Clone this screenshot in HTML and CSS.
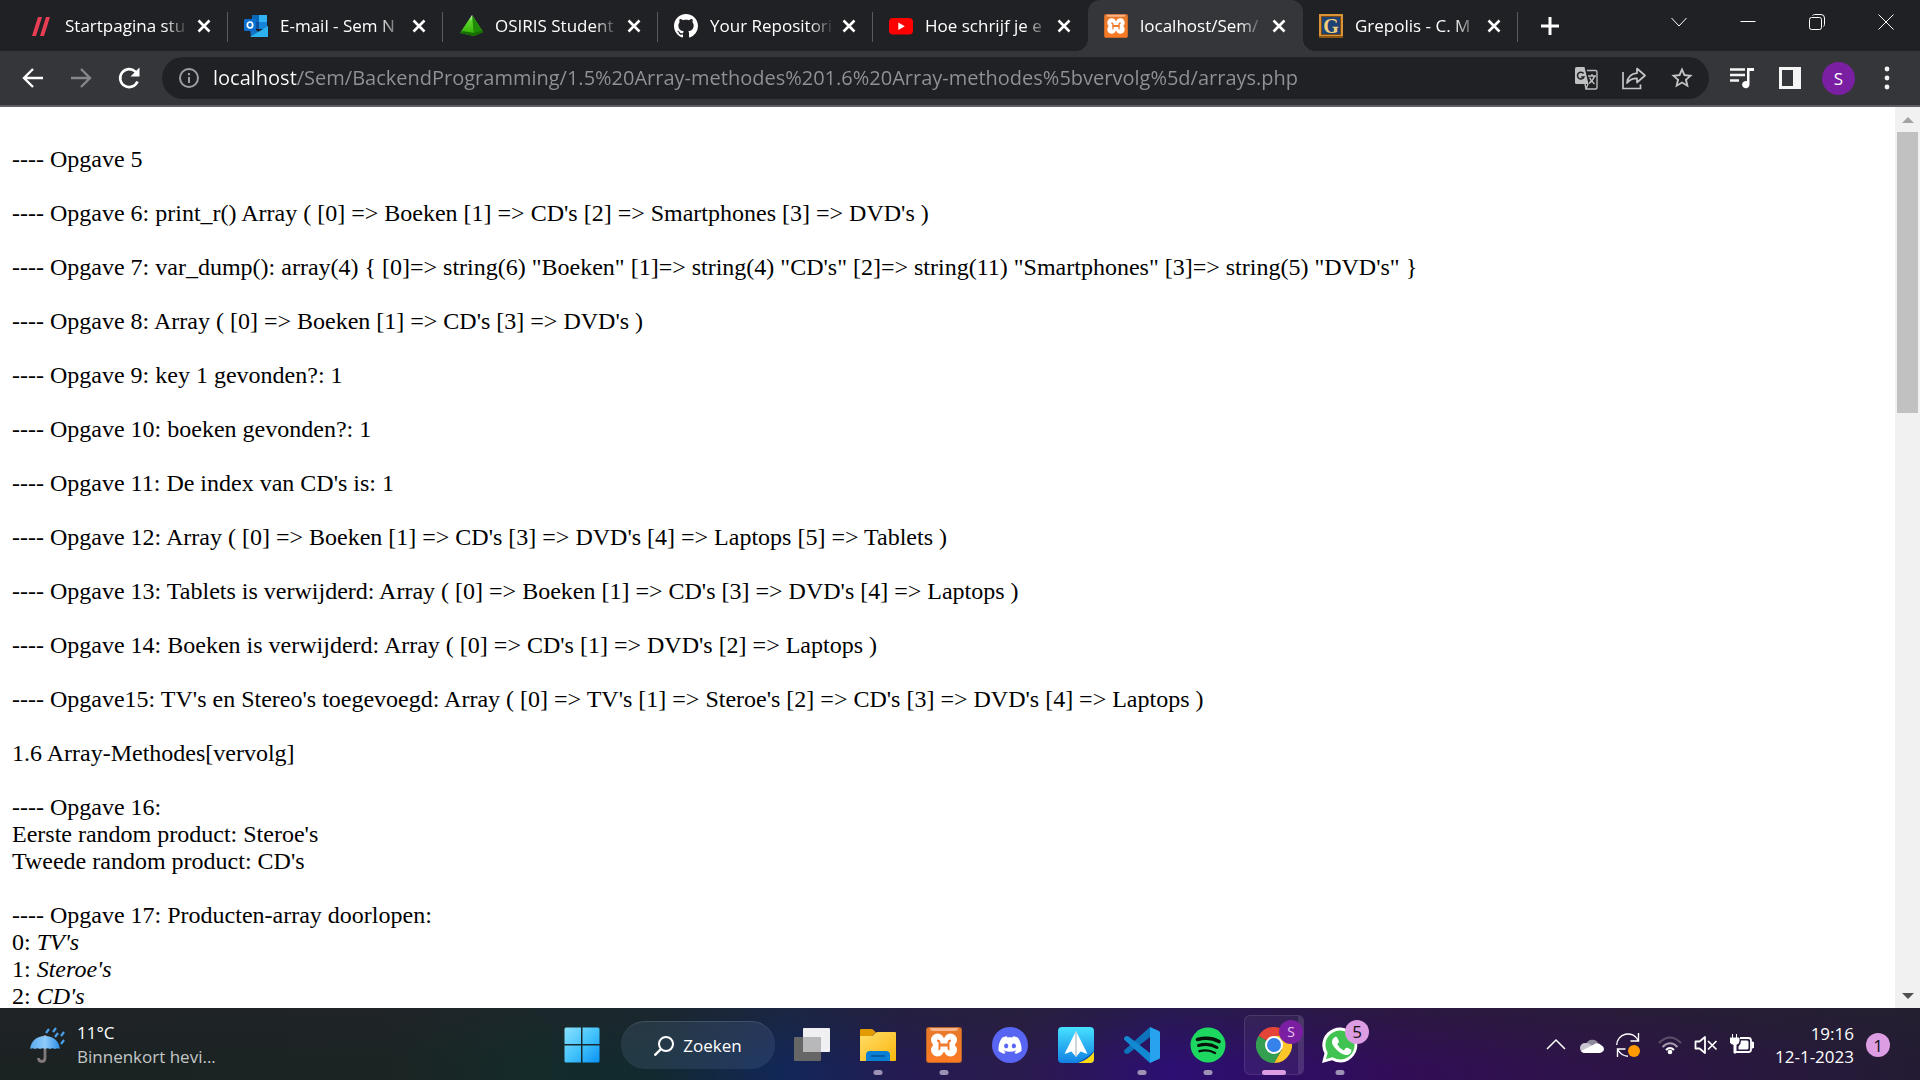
FILE: index.html
```html
<!DOCTYPE html>
<html lang="nl">
<head>
<meta charset="utf-8">
<title>localhost/Sem/BackendProgramming</title>
<link rel="stylesheet" href="styles.css">
</head>
<body>
<svg class="defs" aria-hidden="true">
  <defs>
    <linearGradient id="orange" x1="0" y1="0" x2="0" y2="1"><stop offset="0" stop-color="#e8792b"/><stop offset="1" stop-color="#fb7a24"/></linearGradient>
    <linearGradient id="win" x1="0" y1="0" x2="1" y2="1"><stop offset="0" stop-color="#8be0ff"/><stop offset=".5" stop-color="#45c4fb"/><stop offset="1" stop-color="#0a93f5"/></linearGradient>
    <linearGradient id="folder" x1="0" y1="0" x2="1" y2="1"><stop offset="0" stop-color="#ffdc6a"/><stop offset="1" stop-color="#fbb80c"/></linearGradient>
    <linearGradient id="sky" x1="0" y1="0" x2="0" y2="1"><stop offset="0" stop-color="#46e2ff"/><stop offset="1" stop-color="#1280e4"/></linearGradient>
    <linearGradient id="umbrella" x1="0" y1="0" x2="1" y2="0"><stop offset="0" stop-color="#58a9ec"/><stop offset=".5" stop-color="#8fcbfb"/><stop offset="1" stop-color="#2d8fe6"/></linearGradient>
    <linearGradient id="pyramid" x1="0" y1="0" x2="0" y2="1"><stop offset="0" stop-color="#d9f5d0"/><stop offset=".3" stop-color="#5bd628"/><stop offset="1" stop-color="#2fa800"/></linearGradient>
    <symbol id="xampp" viewBox="0 0 36 36">
      <rect width="36" height="36" rx="3" fill="#b5622b"/>
      <rect x="1" y="1" width="34" height="34" rx="2" fill="url(#orange)"/>
      <path d="M4 1h28q0 3-3 3H7q-3 0-3-3z" fill="#f8b58a"/>
      <g fill="#fff"><circle cx="11.500" cy="13" r="6.500"/><circle cx="24.500" cy="13" r="6.500"/><circle cx="11.500" cy="23" r="6.500"/><circle cx="24.500" cy="23" r="6.500"/><path d="M8 13h20v10H8zM12 11h12v14H12z"/></g>
      <path d="M11 13.500q2.500 0 2.500 2v5q0 2-1 2M25 13.500q-2.500 0-2.500 2v5q0 2 1 2" fill="none" stroke="#f07a2c" stroke-width="2"/>
      <path d="M13 18h10" stroke="#f07a2c" stroke-width="3"/>
    </symbol>
    <symbol id="cross" viewBox="0 0 24 24"><path d="M6.500 6.500l11 11m0-11l-11 11" stroke="#fff" stroke-width="2.600" fill="none"/></symbol>
    <symbol id="youtube" viewBox="0 0 24 24"><rect y="4" width="24" height="16.500" rx="4" fill="#f00"/><path d="M9.300 8.500l6.500 3.700-6.500 3.700z" fill="#fff"/></symbol>
  </defs>
</svg>

<header class="browser">
  <nav class="tabs" aria-label="Tabbladen">
    <div class="tab">
      <svg class="favicon" viewBox="0 0 24 24"><path d="M3 22L9 3h4L7 22zM11 22L17 3h4L15 22z" fill="#e83e54"/></svg>
      <span class="tab-title">Startpagina stu</span>
      <button class="tab-close" aria-label="Sluiten"><svg><use href="#cross"/></svg></button>
    </div>
    <div class="tab">
      <svg class="favicon" viewBox="0 0 24 24"><path d="M8 1h15v14H8z" fill="#1685d8"/><path d="M8 1h7v7H8z" fill="#0a67b8"/><path d="M15 1h8v7h-8z" fill="#33b4f2"/><path d="M8 8h7v7H8z" fill="#0d4f9c"/><path d="M6 13l9 5 9-6v11H7z" fill="#1573c6"/><path d="M6 23l18-11v11z" fill="#2bb2ef"/><rect y="5" width="12" height="12" rx="1" fill="#0a70cf"/><ellipse cx="6" cy="11" rx="2.700" ry="3" fill="none" stroke="#fff" stroke-width="1.700"/></svg>
      <span class="tab-title">E-mail - Sem N</span>
      <button class="tab-close" aria-label="Sluiten"><svg><use href="#cross"/></svg></button>
    </div>
    <div class="tab">
      <svg class="favicon" viewBox="0 0 24 24"><path d="M13 1L1 19l14 3 9-4z" fill="url(#pyramid)"/><path d="M13 1l11 17-9 4z" fill="#1f8a05"/><path d="M1 19l2-2 12 2 9-3v2l-9 4z" fill="#176b00"/></svg>
      <span class="tab-title">OSIRIS Student</span>
      <button class="tab-close" aria-label="Sluiten"><svg><use href="#cross"/></svg></button>
    </div>
    <div class="tab">
      <svg class="favicon" viewBox="0 0 16 16"><path fill="#fff" d="M8 0C3.580 0 0 3.580 0 8c0 3.540 2.290 6.530 5.470 7.590.4.070.55-.17.55-.38 0-.19-.01-.82-.01-1.490-2.010.370-2.530-.490-2.690-.940-.090-.230-.480-.940-.820-1.130-.280-.150-.680-.520-.010-.530.630-.010 1.080.580 1.230.820.720 1.210 1.870.870 2.330.660.070-.520.280-.870.510-1.070-1.780-.200-3.640-.890-3.640-3.950 0-.870.310-1.590.820-2.150-.080-.200-.360-1.020.080-2.120 0 0 .670-.210 2.200.820.640-.180 1.320-.270 2-.270.680 0 1.360.090 2 .270 1.530-1.040 2.200-.820 2.200-.820.440 1.100.160 1.920.080 2.120.510.560.820 1.270.820 2.150 0 3.070-1.870 3.750-3.650 3.950.290.250.540.730.540 1.480 0 1.070-.010 1.930-.010 2.200 0 .210.150.460.550.380A8.013 8.013 0 0016 8c0-4.420-3.580-8-8-8z"/></svg>
      <span class="tab-title">Your Repositori</span>
      <button class="tab-close" aria-label="Sluiten"><svg><use href="#cross"/></svg></button>
    </div>
    <div class="tab before-active">
      <svg class="favicon"><use href="#youtube"/></svg>
      <span class="tab-title">Hoe schrijf je e</span>
      <button class="tab-close" aria-label="Sluiten"><svg><use href="#cross"/></svg></button>
    </div>
    <div class="tab active">
      <svg class="favicon"><use href="#xampp"/></svg>
      <span class="tab-title">localhost/Sem/</span>
      <button class="tab-close" aria-label="Sluiten"><svg><use href="#cross"/></svg></button>
    </div>
    <div class="tab">
      <svg class="favicon" viewBox="0 0 24 24"><rect width="24" height="24" fill="#d9943a"/><rect y="22" width="24" height="2" fill="#8a5413"/><rect x="2" y="2" width="20" height="19" fill="#7d4a12"/><rect x="3" y="3" width="18" height="17" fill="#1d4275"/><text x="12" y="19" class="grepolis-letter">G</text></svg>
      <span class="tab-title">Grepolis - C. M</span>
      <button class="tab-close" aria-label="Sluiten"><svg><use href="#cross"/></svg></button>
    </div>
    <button class="new-tab" aria-label="Nieuw tabblad"><svg viewBox="0 0 18 18"><path d="M9 0v18M0 9h18" stroke="#fff" stroke-width="3"/></svg></button>
    <div class="window-controls">
      <button aria-label="Tabbladen zoeken"><svg viewBox="0 0 16 16"><path d="M.5 4l7.500 8 7.500-8"/></svg></button>
      <button aria-label="Minimaliseren"><svg viewBox="0 0 16 16"><path d="M.5 7.500h15"/></svg></button>
      <button aria-label="Herstellen"><svg viewBox="0 0 16 16"><rect x=".5" y="3.500" width="12" height="12" rx="2"/><path d="M3.500 1.500q1-1 2-1H12q3.500 0 3.500 3.500v6.500q0 1-1 2"/></svg></button>
      <button aria-label="Venster sluiten"><svg viewBox="0 0 16 16"><path d="M.5.5l15 15m0-15l-15 15"/></svg></button>
    </div>
  </nav>
  <div class="toolbar">
    <div class="navigation">
      <button aria-label="Terug"><svg viewBox="0 0 24 24"><path d="M22 12H3.500M12 3l-9 9 9 9" fill="none" stroke="#fff" stroke-width="2.400"/></svg></button>
      <button aria-label="Vooruit"><svg viewBox="0 0 24 24"><path d="M2 12h18.500M12 3l9 9-9 9" fill="none" stroke="#85878a" stroke-width="2.400"/></svg></button>
      <button aria-label="Vernieuwen"><svg viewBox="0 0 24 24"><path d="M20.500 15.500A9 9 0 1118.400 5.600L21 8.500" fill="none" stroke="#fff" stroke-width="2.600"/><path d="M22.500 1.500v9h-9z" fill="#fff"/></svg></button>
    </div>
    <div class="omnibox">
      <svg class="info" viewBox="0 0 20 20"><circle cx="10" cy="10" r="9" fill="none" stroke="#9aa0a6" stroke-width="2"/><path d="M10 9v6M10 5v2.200" stroke="#9aa0a6" stroke-width="2"/></svg>
      <input class="url" type="text" aria-label="Adres" value="localhost/Sem/BackendProgramming/1.5%20Array-methodes%201.6%20Array-methodes%5bvervolg%5d/arrays.php">
      <div class="omnibox-actions">
        <button aria-label="Vertalen"><svg viewBox="0 0 24 24"><path d="M13 4.500h8.500q1.500 0 1.500 1.500v15.500q0 1.500-1.500 1.500H12l-1-5" fill="none" stroke="#b9babc" stroke-width="1.400"/><path d="M2.500 1h8l4 17H2.500Q1 18 1 16.500v-14Q1 1 2.500 1z" fill="#c0c1c3"/><path d="M9.600 7.500A3.400 3.400 0 1010 11H7.200" fill="none" stroke="#202124" stroke-width="1.500"/><path d="M14 10h8M18 8v2m2.500 0q-1 4-5.500 7.500M15.500 11.500q1.500 3.500 5 6.500M14 18l-2 5" fill="none" stroke="#c0c1c3" stroke-width="1.400"/></svg></button>
        <button aria-label="Delen"><svg viewBox="0 0 24 24"><path d="M1 6v16.500h17.500v-4" fill="none" stroke="#c4c5c7" stroke-width="1.700"/><path d="M5 17q1-9 10-9.800V2.500L23 9.500l-8 7v-4.200Q9 12 5 17z" fill="none" stroke="#c4c5c7" stroke-width="1.700" stroke-linejoin="round"/></svg></button>
        <button aria-label="Bladwijzer"><svg viewBox="0 0 24 24"><path fill="#c4c5c7" d="M22.700 9l-7.600-.7L12 1.300 8.900 8.300 1.300 9l5.700 5-1.700 7.500 6.700-4 6.700 4L17 14zM12 15.600l-4 2.400 1.100-4.500-3.500-3 4.600-.4L12 5.800l1.800 4.300 4.600.4-3.500 3L16 18z"/></svg></button>
      </div>
    </div>
    <div class="extras">
      <button aria-label="Media"><svg viewBox="0 0 24 24"><path d="M0 3.500h15M0 9h15M0 14.500h9" stroke="#f5f5f5" stroke-width="2.600"/><path d="M17 2h7v3h-4.500v13.500a3.700 3.700 0 11-2.500-3.400z" fill="#fff"/></svg></button>
      <button aria-label="Zijvenster"><svg viewBox="0 0 24 24"><path fill="#f5f5f5" fill-rule="evenodd" d="M1 1h22v22H1zM4 4v16h11V4z"/></svg></button>
      <button class="avatar" aria-label="Profiel">S</button>
      <button aria-label="Menu"><svg viewBox="0 0 24 24"><g fill="#f5f5f5"><circle cx="12" cy="3" r="2.400"/><circle cx="12" cy="12" r="2.400"/><circle cx="12" cy="21" r="2.400"/></g></svg></button>
    </div>
  </div>
</header>

<div class="viewport">
  <main class="page"><br>
---- Opgave 5<br><br>
---- Opgave 6: print_r() Array ( [0] =&gt; Boeken [1] =&gt; CD's [2] =&gt; Smartphones [3] =&gt; DVD's )<br><br>
---- Opgave 7: var_dump(): array(4) { [0]=&gt; string(6) "Boeken" [1]=&gt; string(4) "CD's" [2]=&gt; string(11) "Smartphones" [3]=&gt; string(5) "DVD's" }<br><br>
---- Opgave 8: Array ( [0] =&gt; Boeken [1] =&gt; CD's [3] =&gt; DVD's )<br><br>
---- Opgave 9: key 1 gevonden?: 1<br><br>
---- Opgave 10: boeken gevonden?: 1<br><br>
---- Opgave 11: De index van CD's is: 1<br><br>
---- Opgave 12: Array ( [0] =&gt; Boeken [1] =&gt; CD's [3] =&gt; DVD's [4] =&gt; Laptops [5] =&gt; Tablets )<br><br>
---- Opgave 13: Tablets is verwijderd: Array ( [0] =&gt; Boeken [1] =&gt; CD's [3] =&gt; DVD's [4] =&gt; Laptops )<br><br>
---- Opgave 14: Boeken is verwijderd: Array ( [0] =&gt; CD's [1] =&gt; DVD's [2] =&gt; Laptops )<br><br>
---- Opgave15: TV's en Stereo's toegevoegd: Array ( [0] =&gt; TV's [1] =&gt; Steroe's [2] =&gt; CD's [3] =&gt; DVD's [4] =&gt; Laptops )<br><br>
1.6 Array-Methodes[vervolg]<br><br>
---- Opgave 16:<br>
Eerste random product: Steroe's<br>
Tweede random product: CD's<br><br>
---- Opgave 17: Producten-array doorlopen:<br>
0: <i>TV's</i><br>
1: <i>Steroe's</i><br>
2: <i>CD's</i>
  </main>
  <div class="scrollbar" aria-hidden="true">
    <svg viewBox="0 0 12 6"><path d="M0 6l6-6 6 6z" fill="#a3a3a3"/></svg>
    <div class="track"><div class="thumb"></div></div>
    <svg viewBox="0 0 12 6"><path d="M0 0l6 6 6-6z" fill="#505050"/></svg>
  </div>
</div>

<footer class="taskbar">
  <button class="weather">
    <svg viewBox="0 0 36 36"><path d="M15 8v23q0 3.500-3.200 3.500T8.500 31" fill="none" stroke="#82797b" stroke-width="2.800"/><path d="M0 22Q2 9.500 15 9q13 .5 15 13-2-1.500-5 0-2.500-1.500-5 0-2.500-1.500-5 0-2.500-1.500-5 0-2.500-1.500-5 0-3-1.500-5 0z" fill="url(#umbrella)"/><path d="M16 6l3-4M23 5l3-4M25 10l3-4M31 9l3-4M31 17l3-4" stroke="#4b9fe8" stroke-width="2.200"/></svg>
    <span class="weather-text"><span>11°C</span><span class="forecast">Binnenkort hevi...</span></span>
  </button>
  <div class="apps">
    <button class="app" aria-label="Start"><svg viewBox="0 0 36 36"><path fill="url(#win)" d="M2 .500h15v16.500H.500V2Q.500.500 2 .500zM18.500.500H34q1.500 0 1.500 1.500v15h-17zM.500 18.500H17v17H2q-1.500 0-1.500-1.500zM18.500 18.500h17V34q0 1.500-1.500 1.500H18.500z"/></svg></button>
    <button class="search"><svg viewBox="0 0 20 20"><circle cx="12" cy="8" r="7" fill="none" stroke="#fff" stroke-width="2"/><path d="M7 13l-6.500 6.500" stroke="#fff" stroke-width="2.400"/></svg>Zoeken</button>
    <button class="app" aria-label="Taakweergave"><svg viewBox="0 0 36 36"><rect y="10" width="27" height="24" rx="1" fill="#666"/><rect x="9" y="1" width="27" height="24" rx="1" fill="#f0f0f2"/><path d="M9 10h18v15H9z" fill="#b8b8ba"/></svg></button>
    <button class="app running" aria-label="Verkenner"><svg viewBox="0 0 36 36"><path d="M0 3q0-1 1-1h10q1.500 0 2.500 1l2.500 2.500L12 9H0z" fill="#e29b05"/><path d="M0 9h11q1.500 0 2.500-1l2-2q1-1 2.500-1h17q1 0 1 1v27q0 1-1 1H0z" fill="url(#folder)"/><path d="M6 34v-6q0-4 4-4h16q4 0 4 4v6z" fill="#0a7fd6"/><path d="M11 29h14" stroke="#075292" stroke-width="1.500"/></svg></button>
    <button class="app running" aria-label="XAMPP"><svg><use href="#xampp"/></svg></button>
    <button class="app" aria-label="Discord"><svg viewBox="0 0 36 36"><circle cx="18" cy="18" r="18" fill="#5865f2"/><g transform="translate(6.500 6.500) scale(.96)"><path fill="#fff" d="M20.317 4.370a19.791 19.791 0 00-4.885-1.515.074.074 0 00-.079.037c-.211.375-.445.865-.608 1.250-1.845-.276-3.680-.276-5.487 0-.164-.393-.406-.874-.618-1.250a.077.077 0 00-.079-.037 19.736 19.736 0 00-4.885 1.515.070.070 0 00-.032.028C.533 9.046-.319 13.580.099 18.058a.082.082 0 00.031.056c2.053 1.508 4.041 2.423 5.993 3.029a.078.078 0 00.084-.028c.462-.630.873-1.295 1.226-1.994a.076.076 0 00-.042-.106c-.653-.248-1.274-.550-1.872-.892a.077.077 0 01-.008-.128c.126-.094.252-.192.372-.291a.074.074 0 01.078-.011c3.928 1.793 8.180 1.793 12.061 0a.074.074 0 01.079.010c.120.099.246.198.373.292a.077.077 0 01-.007.128 12.299 12.299 0 01-1.873.891.077.077 0 00-.041.107c.360.698.772 1.363 1.225 1.993a.076.076 0 00.084.029c1.961-.607 3.950-1.522 6.002-3.029a.077.077 0 00.031-.055c.500-5.177-.838-9.674-3.549-13.660a.061.061 0 00-.031-.029zM8.020 15.331c-1.183 0-2.157-1.086-2.157-2.419s.956-2.419 2.157-2.419c1.211 0 2.176 1.095 2.157 2.419 0 1.333-.956 2.419-2.157 2.419zm7.975 0c-1.183 0-2.157-1.086-2.157-2.419s.955-2.419 2.157-2.419c1.211 0 2.176 1.095 2.157 2.419 0 1.333-.946 2.419-2.157 2.419z"/></g></svg></button>
    <button class="app" aria-label="Spark"><svg viewBox="0 0 36 36"><rect width="36" height="36" rx="4" fill="url(#sky)"/><path d="M19 36q10-5 17-12v8q0 4-4 4z" fill="#0752b8"/><path d="M20 36q10-3 16-11v7q0 4-4 4z" fill="#ffda12"/><path d="M18 4L6.500 27l7-2.500L18 30l4.500-5.500 7 2.500z" fill="#fff"/><path d="M18 5v24" stroke="#bfc7d0" stroke-width="1.500"/></svg></button>
    <button class="app running" aria-label="Visual Studio Code"><svg viewBox="0 0 36 36"><path d="M26 0L35 4q1 .5 1 1.500v25q0 1-1 1.500l-9 4z" fill="#27a3ee"/><path d="M26 0v10L4.500 26.500 2 27l-2-2q-.5-1 .5-2z" fill="#0d74bb"/><path d="M26 36V26L4.500 9.500 2 9l-2 2q-.5 1 .5 2z" fill="#1389d2"/></svg></button>
    <button class="app running" aria-label="Spotify"><svg viewBox="0 0 36 36"><circle cx="18" cy="18" r="17.500" fill="#1ed760"/><g fill="none" stroke="#08120b" stroke-linecap="round"><path d="M7.500 12.500q12-3.300 21.500 2" stroke-width="3.600"/><path d="M8.500 18.500q10-3 18.500 2" stroke-width="3"/><path d="M9.500 24.200q8.500-2.300 15.500 1.800" stroke-width="2.400"/></g></svg></button>
    <button class="app running current" aria-label="Chrome"><svg viewBox="0 0 36 36"><path d="M18 18L2.400 9A18 18 0 0133.600 9z" fill="#e33b2e"/><path d="M18 9h15.600A18 18 0 0118 36l7.800-13.500z" fill="#fcc31e"/><path d="M2.400 9A18 18 0 0018 36l7.800-13.500L18 18z" fill="#2a9a48"/><circle cx="18" cy="18" r="9" fill="#fff"/><circle cx="18" cy="18" r="7" fill="#2b7de9"/></svg><span class="badge profile">S</span></button>
    <button class="app running" aria-label="WhatsApp"><svg viewBox="0 0 36 36"><path d="M0 36l2.500-9.500A17.500 17.500 0 1119 35.500q-5 0-9-2.300z" fill="#fff"/><path d="M4 32l1.700-6.300A14.500 14.500 0 1119 32.500q-4.500 0-8.500-2.300z" fill="#40c351"/><path d="M13 10q1-.5 2 .2l2 4.300q0 1-1.700 2.700 2 4.300 6.500 6.300l2-2.500q.8-.6 1.600-.2l4 2q.5 4-4 5.200-4 .8-9.500-4-6-5.500-6-9.500.2-3 3.100-4.500z" fill="#fff"/></svg><span class="badge">5</span></button>
  </div>
  <div class="tray">
    <svg viewBox="0 0 24 24"><path d="M3 16l9-9 9 9" fill="none" stroke="#fff" stroke-width="1.500"/></svg>
    <svg viewBox="0 0 24 24"><path d="M6 12a6.500 6.500 0 0112-2l-6 8z" fill="#8f899b"/><path d="M5 20a5 5 0 010-10q5-.5 8 4z" fill="#c9c5d1"/><path d="M5 20q-3 0-4-2l13-6.500q4-2.500 7 .500 3 1.500 3 4t-4 4z" fill="#fff"/></svg>
    <svg viewBox="0 0 24 24"><path d="M.7 12A11.300 11.300 0 0122 7M22.500 0v8h-8M1.500 24v-8h8M2 17q3.500 6 10 6.300" fill="none" stroke="#fff" stroke-width="1.400"/><circle cx="18" cy="18" r="6" fill="#ff9b00"/></svg>
    <svg class="wifi" viewBox="0 0 24 24"><path d="M1 10q11-11 22 0" fill="none" stroke="#5c506a" stroke-width="2"/><g fill="none" stroke="#fff" stroke-width="2"><path d="M4.500 14q7.500-7.500 15 0" stroke="#a39bad"/><path d="M8 17q4-4 8 0"/></g><circle cx="12" cy="19" r="2.300" fill="#fff"/></svg>
    <svg viewBox="0 0 24 24"><path d="M1.500 8.500h4L11 4v16l-5.500-4.500h-4z" fill="none" stroke="#fff" stroke-width="1.800" stroke-linejoin="round"/><path d="M14 8l8.500 8.500m0-8.500L14 16.500" stroke="#fff" stroke-width="1.700"/></svg>
    <svg viewBox="0 0 24 24"><path d="M2.500 1v5M6.500 1v5M0 5h9v3q0 3-3 3.500V20H4v-8.500Q0 11 0 8zM22 9h1l1 1v4l-1 1h-1z" fill="#fff" stroke="#fff"/><path d="M10 5h8.500Q21 5 21 7.500v9q0 2.500-2.500 2.500H6" fill="none" stroke="#fff" stroke-width="1.800"/><path d="M11 7.500h6q1.500 0 1.500 1.500v6q0 1.500-1.500 1.500H8.500v-3Q11 11 11 7.500z" fill="#fff"/></svg>
    <div class="clock"><time>19:16</time><time>12-1-2023</time></div>
    <button class="notifications" aria-label="Meldingen">1</button>
  </div>
</footer>
</body>
</html>
```
FILE: styles.css
```css
* { box-sizing: border-box; }

body {
  margin: 0;
  height: 100vh;
  display: flex;
  flex-direction: column;
  overflow: hidden;
  background: #fff;
  font-family: "Open Sans", "Noto Sans", sans-serif;
  font-size: 17px;
  color: #fff;
}

button {
  margin: 0;
  padding: 0;
  border: 0;
  background: none;
  color: inherit;
  font: inherit;
  display: flex;
  align-items: center;
  justify-content: center;
}

svg { display: block; flex: none; }

.defs { position: absolute; width: 0; height: 0; }

/* Tab strip */
.tabs {
  display: flex;
  height: 51px;
  padding-left: 13px;
  background: #202124;
}

.tab {
  display: flex;
  align-items: center;
  width: 215px;
  padding: 0 12px 0 16px;
  position: relative;
}

.tab::after {
  content: "";
  position: absolute;
  right: 0;
  top: 12px;
  width: 1px;
  height: 30px;
  background: #5a5b5f;
}

.tab.active::after,
.tab.before-active::after { display: none; }

.tab.active {
  background: #35363a;
  border-radius: 12px 12px 0 0;
}

/* Outward curve on both feet of the active tab */
.tab.active::before {
  content: "";
  position: absolute;
  left: -12px;
  right: -12px;
  bottom: 0;
  height: 12px;
  background:
    radial-gradient(circle at 0 0, transparent 12px, #35363a 12px) left / 12px 12px no-repeat,
    radial-gradient(circle at 100% 0, transparent 12px, #35363a 12px) right / 12px 12px no-repeat;
}

.favicon { width: 24px; height: 24px; }

.tab-title {
  flex: 1;
  margin: 0 3px 0 12px;
  white-space: nowrap;
  mask-image: linear-gradient(to right, #000 80%, transparent);
}

.tab-close,
.tab-close svg { width: 24px; height: 24px; }

.grepolis-letter {
  font: bold 20px "Liberation Serif", serif;
  fill: #f2cf7a;
  text-anchor: middle;
}

.new-tab { width: 64px; }
.new-tab svg { width: 18px; height: 18px; }

.window-controls {
  display: flex;
  margin-left: auto;
  height: 44px;
}

.window-controls button { width: 69px; }

.window-controls svg {
  width: 16px;
  height: 16px;
  fill: none;
  stroke: #fff;
}

/* Toolbar */
.toolbar {
  display: flex;
  align-items: center;
  height: 56px;
  padding: 0 9px;
  background: #35363a;
  border-bottom: 2px solid #5f6064;
}

.navigation { display: flex; margin-right: 9px; }
.navigation button { width: 48px; height: 42px; }
.navigation svg { width: 24px; height: 24px; }

.omnibox {
  flex: 1;
  display: flex;
  align-items: center;
  height: 42px;
  padding: 0 3px 0 17px;
  border-radius: 21px;
  background: #202124;
}

.info { width: 20px; height: 20px; }

/* The host is drawn bright, the rest of the address dimmed */
.url {
  flex: 1;
  min-width: 0;
  margin-left: 14px;
  padding: 0;
  border: 0;
  outline: 0;
  font: inherit;
  font-size: 20px;
  line-height: 30px;
  color: transparent;
  background: linear-gradient(to right, #fff 84px, #909396 84px);
  background-clip: text;
  -webkit-background-clip: text;
}

.omnibox-actions { display: flex; }
.omnibox-actions button { width: 48px; height: 42px; }
.omnibox-actions svg { width: 24px; height: 24px; }

.extras { display: flex; align-items: center; margin-left: 9px; }
.extras button { width: 48px; height: 33px; }
.extras svg { width: 24px; height: 24px; }

.extras .avatar {
  width: 33px;
  margin: 0 8px;
  border-radius: 50%;
  background: #7b1fa2;
}

/* Document */
.viewport {
  flex: 1;
  min-height: 0;
  display: flex;
}

.page {
  flex: 1;
  overflow: hidden;
  padding: 12px;
  color: #000;
  font: 24px/27px "Liberation Serif", serif;
}

.scrollbar {
  width: 25px;
  display: flex;
  flex-direction: column;
  align-items: center;
  padding: 10px 2px 9px;
  background: #f1f1f1;
}

.scrollbar svg { width: 12px; height: 6px; }

.track { flex: 1; width: 100%; padding: 9px 0; }
.thumb { height: 33%; background: #c1c1c1; }

/* Taskbar */
.taskbar {
  display: grid;
  grid-template-columns: 1fr auto 1fr;
  height: 72px;
  padding-top: 2px;
  background:
    linear-gradient(to bottom, rgba(36, 36, 44, 0.5), transparent 80%),
    linear-gradient(to right, #1b2222 0%, #1b2423 20%, #142b2a 28%, #12292f 34%, #122758 41%, #241b52 47%, #2a1b4c 53%, #2c0f72 61%, #320d56 73%, #2e1349 82%, #251a38 96%, #231b33 100%);
}

.weather { justify-self: start; padding-left: 30px; }
.weather svg { width: 36px; height: 36px; }

.weather-text {
  display: flex;
  flex-direction: column;
  margin-left: 11px;
  line-height: 24px;
  text-align: left;
}

.forecast { color: #c3c7c7; }

.apps { display: flex; align-items: center; padding-left: 2px; }

.app {
  position: relative;
  width: 66px;
  height: 60px;
}

.app svg { width: 36px; height: 36px; }

.search {
  width: 154px;
  height: 48px;
  margin: 0 4px 0 6px;
  gap: 9px;
  border-radius: 24px;
  background: rgba(120, 150, 190, 0.16);
  border-top: 1px solid rgba(255, 255, 255, 0.12);
}

.search svg { width: 20px; height: 20px; }

.running::after {
  content: "";
  position: absolute;
  bottom: 0;
  left: 50%;
  width: 9px;
  height: 5px;
  border-radius: 3px;
  transform: translateX(-50%);
  background: #9d92b5;
}

.current::after { width: 24px; background: #dc9de2; }

.current::before {
  content: "";
  position: absolute;
  inset: 0 3px 0 3px;
  border: 1px solid rgba(255, 255, 255, 0.1);
  border-right-width: 6px;
  border-radius: 6px;
  background: rgba(255, 255, 255, 0.05);
}

.badge {
  position: absolute;
  right: 4px;
  top: 5px;
  width: 24px;
  height: 24px;
  border-radius: 50%;
  background: #dc9de2;
  color: #111;
  line-height: 24px;
  text-align: center;
}

.badge.profile { background: #7b1fa2; color: #e3c6ee; font-size: 14px; }

.tray {
  display: flex;
  align-items: center;
  justify-self: end;
  gap: 12px;
  padding-right: 30px;
}

.tray svg { width: 24px; height: 24px; }
.tray .wifi { margin-left: 6px; }

.clock {
  display: flex;
  flex-direction: column;
  width: 88px;
  line-height: 23px;
  text-align: right;
  white-space: nowrap;
  align-items: flex-end;
}

.notifications {
  width: 24px;
  height: 24px;
  border-radius: 50%;
  background: #dc9de2;
  color: #111;
}
```
